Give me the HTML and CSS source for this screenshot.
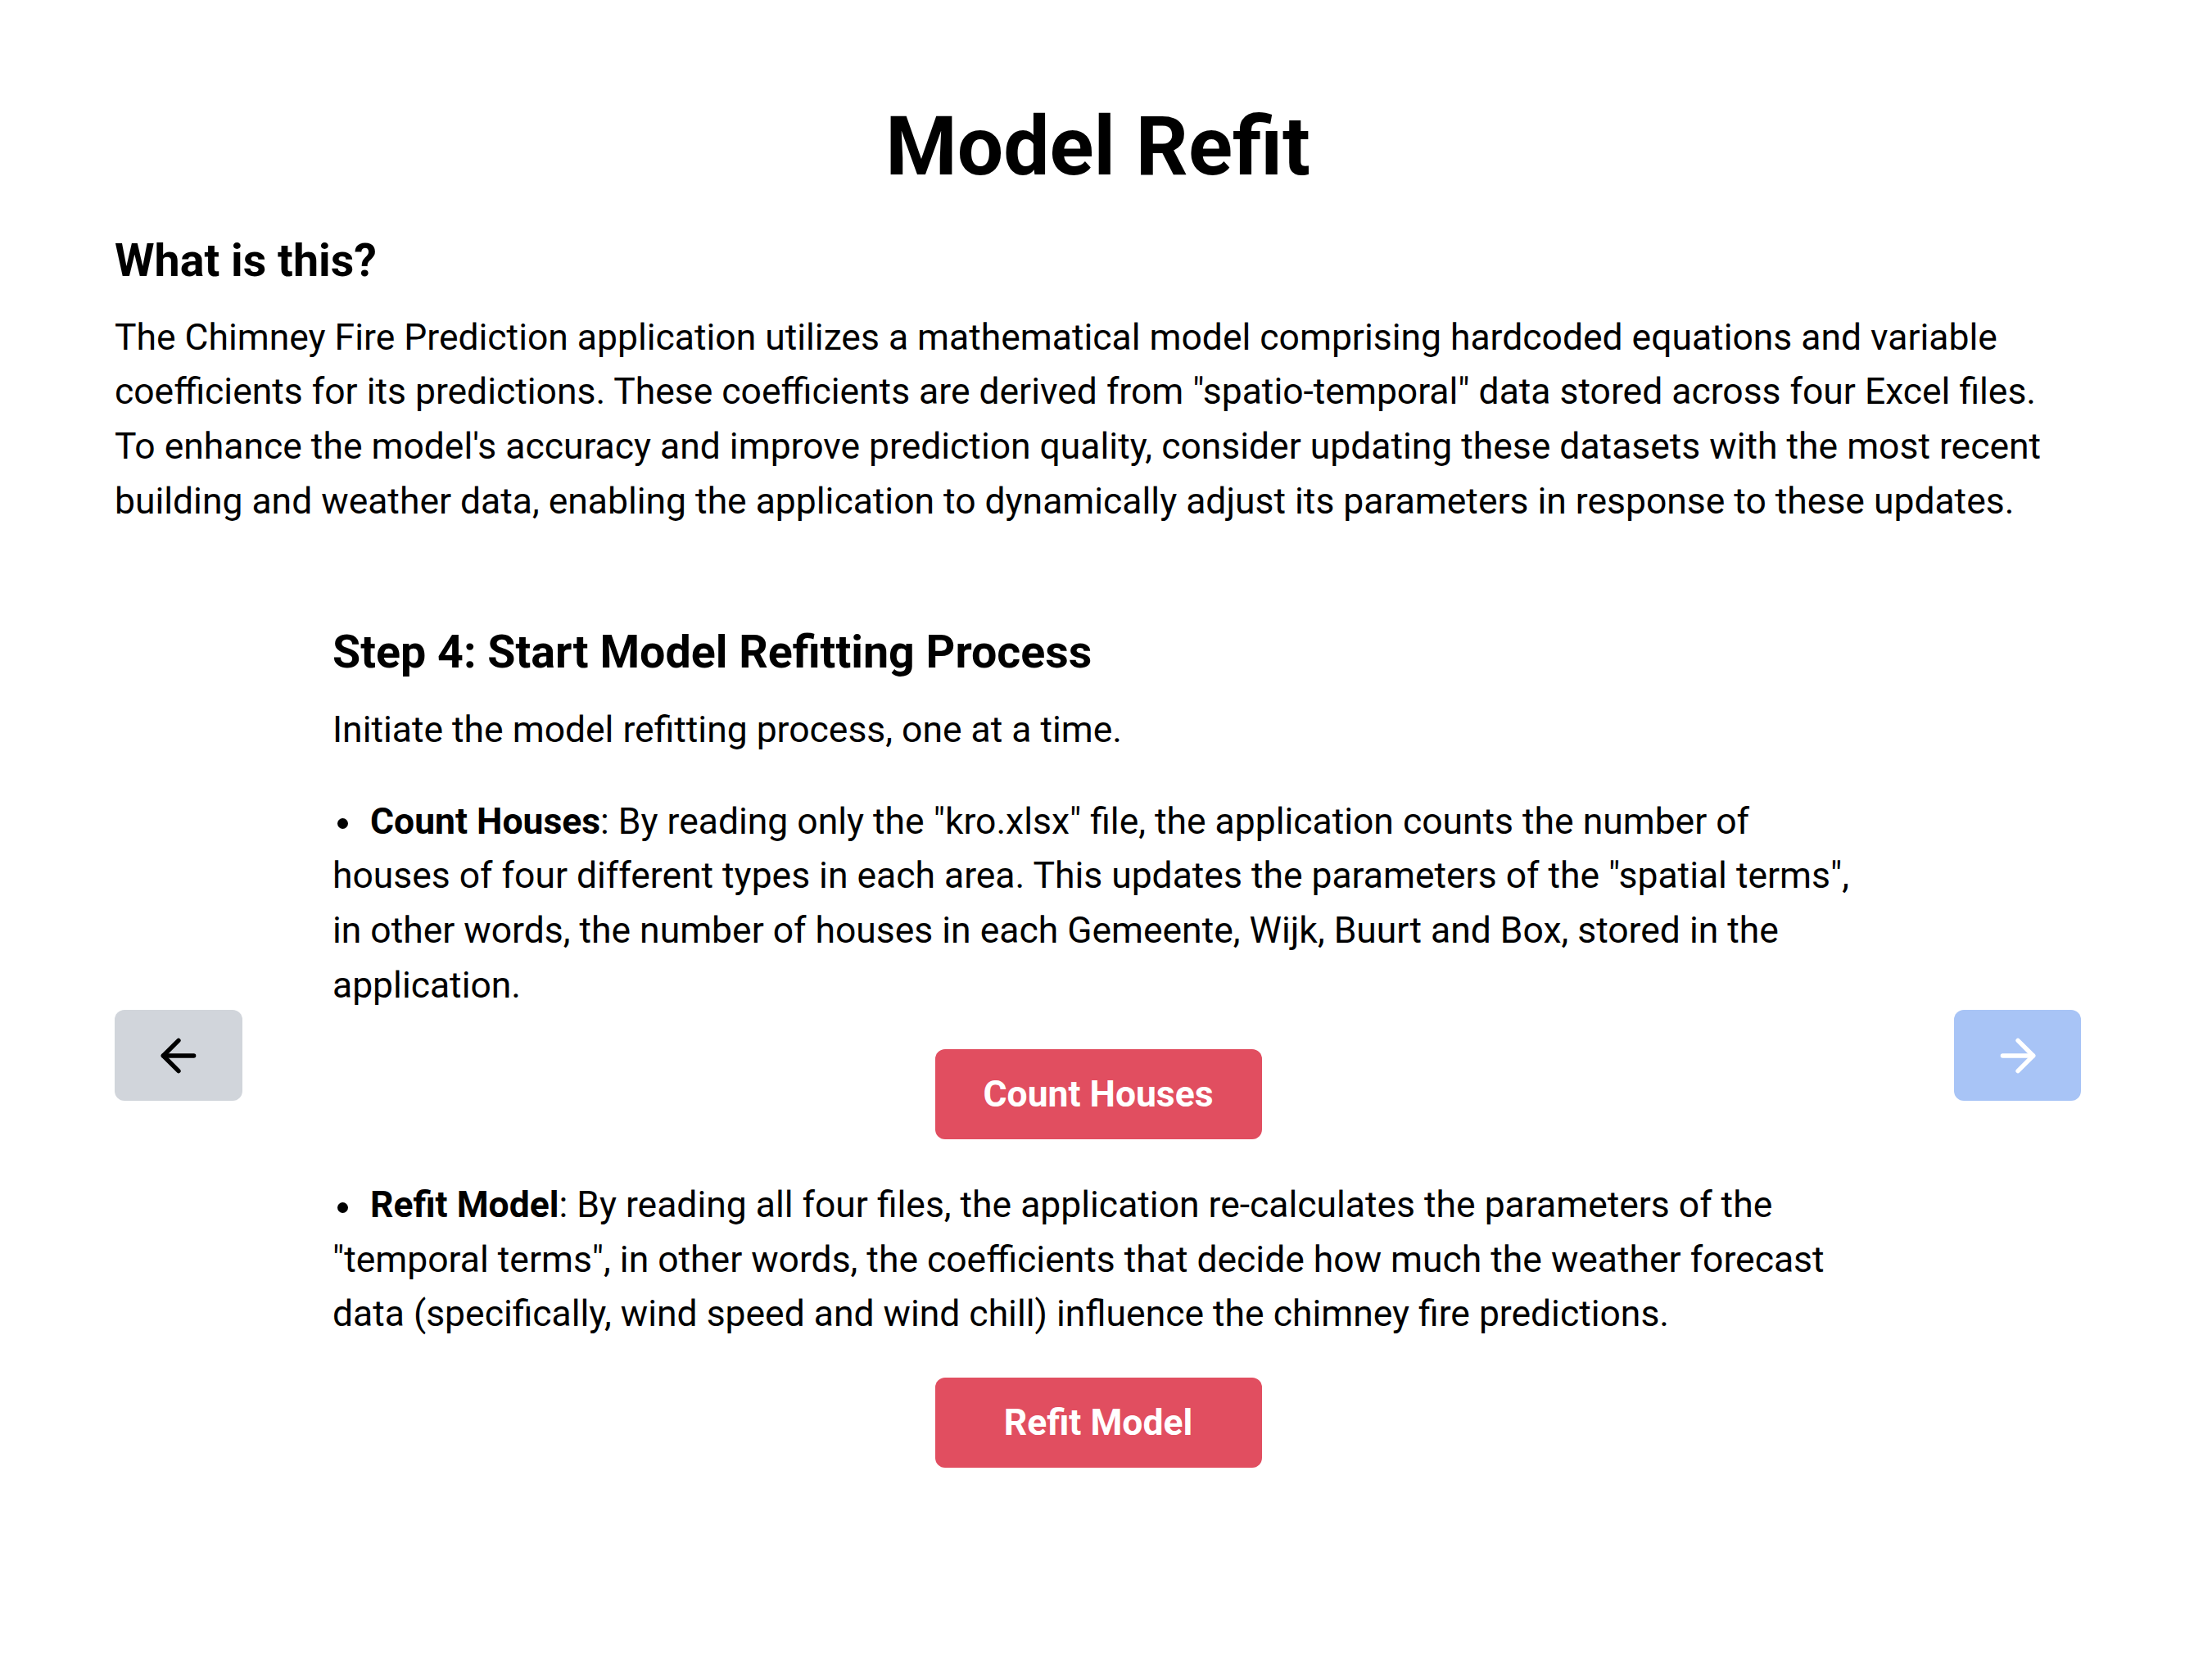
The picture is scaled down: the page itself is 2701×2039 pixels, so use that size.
FILE: index.html
```html
<!DOCTYPE html>
<html lang="en">
<head>
<meta charset="utf-8">
<title>Model Refit</title>
<link rel="stylesheet" href="styles.css">
</head>
<body>
<main class="page">
  <h1 class="title">Model Refit</h1>
  <h2 class="section-title">What is this?</h2>
  <p class="intro">The Chimney Fire Prediction application utilizes a mathematical model comprising hardcoded equations and variable coefficients for its predictions. These coefficients are derived from "spatio-temporal" data stored across four Excel files. To enhance the model's accuracy and improve prediction quality, consider updating these datasets with the most recent building and weather data, enabling the application to dynamically adjust its parameters in response to these updates.</p>

  <section class="stepper">
    <button class="nav-btn nav-prev" type="button" aria-label="Previous step">
      <svg viewBox="0 0 24 24" class="nav-icon" fill="none" stroke="currentColor" stroke-width="2" stroke-linecap="round" stroke-linejoin="round"><path d="M19 12H5"/><path d="M12 19l-7-7 7-7"/></svg>
    </button>

    <div class="step">
      <h3 class="step-title">Step 4: Start Model Refitting Process</h3>
      <p class="step-text">Initiate the model refitting process, one at a time.</p>
      <ul class="actions">
        <li class="action">
          <p class="action-text"><span class="bullet"></span><strong>Count Houses</strong>: By reading only the "kro.xlsx" file, the application counts the number of houses of four different types in each area. This updates the parameters of the "spatial terms", in other words, the number of houses in each Gemeente, Wijk, Buurt and Box, stored in the application.</p>
          <div class="action-row"><button class="action-btn" type="button">Count Houses</button></div>
        </li>
        <li class="action">
          <p class="action-text"><span class="bullet"></span><strong>Refit Model</strong>: By reading all four files, the application re-calculates the parameters of the "temporal terms", in other words, the coefficients that decide how much the weather forecast data (specifically, wind speed and wind chill) influence the chimney fire predictions.</p>
          <div class="action-row"><button class="action-btn" type="button">Refit Model</button></div>
        </li>
      </ul>
    </div>

    <button class="nav-btn nav-next" type="button" aria-label="Next step">
      <svg viewBox="0 0 24 24" class="nav-icon" fill="none" stroke="currentColor" stroke-width="2" stroke-linecap="round" stroke-linejoin="round"><path d="M5 12h14"/><path d="M12 5l7 7-7 7"/></svg>
    </button>
  </section>
</main>
</body>
</html>
```

FILE: styles.css
```css
* { box-sizing: border-box; }

html, body {
  margin: 0;
  padding: 0;
  background: #ffffff;
}

body {
  font-family: Roboto, "Noto Sans", "Liberation Sans", sans-serif;
  color: #000000;
}

.page {
  padding: 120px 160px 200px 140px;
}

.title {
  margin: 0;
  font-size: 100px;
  font-weight: 700;
  line-height: 117px;
  text-align: center;
}

.section-title {
  margin: 49px 0 0;
  font-size: 55.56px;
  font-weight: 700;
  line-height: 64px;
}

.intro {
  margin: 28.5px 0 0;
  padding-right: 30px;
  font-size: 44.44px;
  line-height: 66.67px;
}

.stepper {
  margin-top: 113px;
  display: flex;
  align-items: center;
  gap: 110px;
}

.nav-btn {
  flex: 0 0 auto;
  width: 156px;
  height: 111px;
  border: 0;
  border-radius: 12px;
  display: flex;
  align-items: center;
  justify-content: center;
  padding: 0;
  cursor: pointer;
}

.nav-prev {
  background: #d1d5db;
  color: #000000;
}

.nav-next {
  width: 155px;
  background: #a8c4f6;
  color: #ffffff;
}

.nav-icon {
  width: 64px;
  height: 64px;
}

.step {
  flex: 1 1 auto;
  padding-bottom: 27px;
}

.step-title {
  margin: 0;
  font-size: 55.56px;
  font-weight: 700;
  line-height: 77.78px;
}

.step-text {
  margin: 22px 0 0;
  font-size: 44.44px;
  line-height: 66.67px;
}

.actions {
  list-style: none;
  margin: 45px 0 0;
  padding: 0;
}

.action + .action {
  margin-top: 47px;
}

.action-text {
  margin: 0;
  font-size: 44.44px;
  line-height: 66.67px;
}

.action-text strong {
  font-weight: 700;
}

.bullet {
  display: inline-block;
  width: 13px;
  height: 13px;
  border-radius: 50%;
  background: #000000;
  margin: 0 27px 0 6px;
  vertical-align: middle;
}

.action-row {
  margin-top: 44.5px;
  display: flex;
  justify-content: center;
}

.action-btn {
  width: 399px;
  height: 110px;
  border: 0;
  border-radius: 12px;
  background: #e14e60;
  color: #ffffff;
  font-family: Roboto, "Noto Sans", "Liberation Sans", sans-serif;
  font-size: 44.44px;
  font-weight: 700;
  cursor: pointer;
}

.action:last-child .action-row {
  margin-top: 44px;
}
```
